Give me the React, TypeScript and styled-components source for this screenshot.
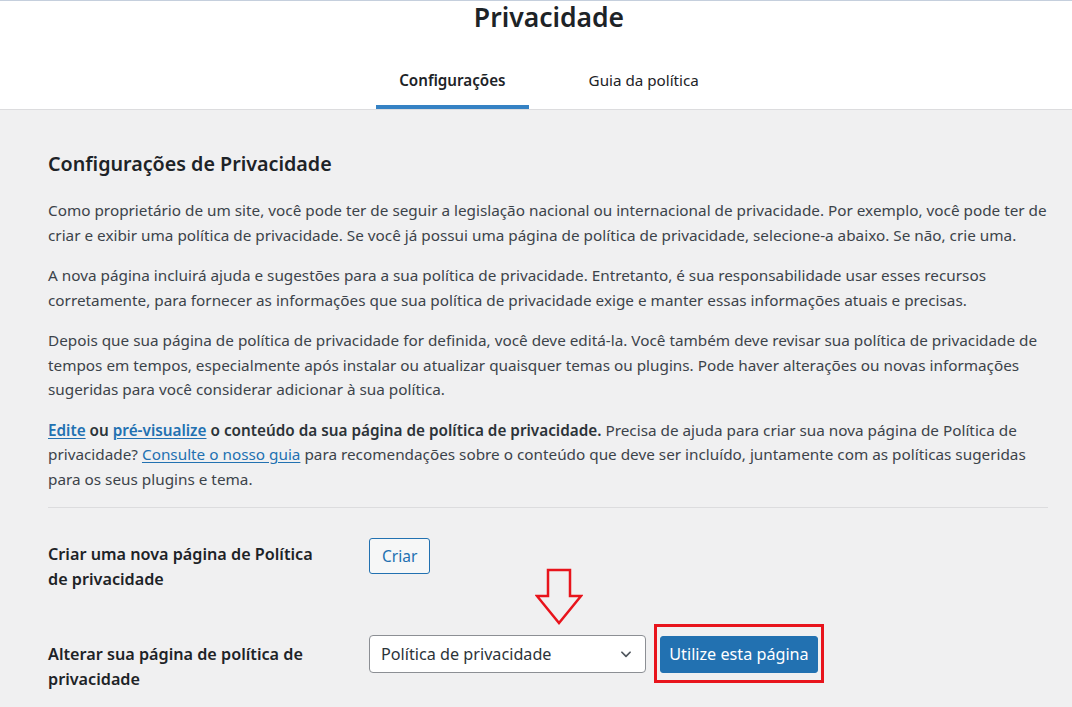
import styled, { createGlobalStyle } from "styled-components";

const GlobalStyle = createGlobalStyle`
	html, body {
		margin: 0;
		padding: 0;
		background: #f0f0f1;
	}
	body {
		font-family: "Noto Sans", "Open Sans", sans-serif;
		color: #3c434a;
		-webkit-font-smoothing: antialiased;
	}
`;

const Page = styled.div`
	width: 1072px;
	height: 707px;
	overflow: hidden;
	background: #f0f0f1;
`;

const Header = styled.header`
	display: flex;
	flex-direction: column;
	align-items: center;
	padding-left: 26px;
	background: #fff;
	border-top: 1px solid #c5cfdd;
	border-bottom: 1px solid #dcdcde;
`;

const Title = styled.h1`
	margin: 0;
	font-size: 26.5px;
	line-height: 32px;
	font-weight: 600;
	color: #1d2327;
`;

const Tabs = styled.nav`
	display: flex;
	gap: 37px;
	margin-top: 16px;
`;

const Tab = styled.a<{ $active?: boolean }>`
	display: block;
	padding: 19px 23px 13px;
	font-size: 15.2px;
	line-height: 24px;
	font-weight: ${(p) => (p.$active ? 600 : 400)};
	color: #1d2327;
	text-decoration: none;
	border-bottom: 4px solid ${(p) => (p.$active ? "#3582c4" : "transparent")};
`;

const Body = styled.main`
	padding: 40px 24px 0 48px;
`;

const SectionTitle = styled.h2`
	margin: 0 0 20px;
	font-size: 19.7px;
	line-height: 28px;
	font-weight: 600;
	color: #1d2327;
`;

const Paragraph = styled.p`
	margin: 0 0 16px;
	font-size: 15.3px;
	line-height: 24.5px;
	color: #3c434a;
	white-space: nowrap;
`;

const Strong = styled.strong`
	font-weight: 600;
	color: #2c3338;
`;

const Link = styled.a`
	color: #2271b1;
	text-decoration: underline;
	text-underline-offset: 2px;
`;

const Divider = styled.hr`
	margin: 0;
	border: none;
	border-top: 1px solid #dcdcde;
`;

const FormRow = styled.div<{ $top: number; $labelOffset: number }>`
	display: grid;
	grid-template-columns: 321px auto;
	align-items: start;
	margin-top: ${(p) => p.$top}px;

	& > label {
		margin-top: ${(p) => p.$labelOffset}px;
	}
`;

const RowLabel = styled.label`
	font-size: 16.2px;
	line-height: 24.5px;
	font-weight: 600;
	color: #1d2327;
`;

const Controls = styled.div`
	position: relative;
	display: flex;
	align-items: center;
	gap: 8px;
`;

const SecondaryButton = styled.button`
	height: 36px;
	padding: 0 12px;
	font-family: inherit;
	font-size: 15.5px;
	color: #2271b1;
	background: #f6f7f7;
	border: 1px solid #2271b1;
	border-radius: 3px;
`;

const SelectBox = styled.div`
	display: flex;
	align-items: center;
	justify-content: space-between;
	box-sizing: border-box;
	width: 277px;
	height: 38px;
	padding: 0 12px 0 11px;
	font-size: 16.2px;
	color: #2c3338;
	background: #fff;
	border: 1px solid #8c8f94;
	border-radius: 4px;
`;

const Highlight = styled.div`
	margin: -12px 0 -10px;
	padding: 9px 3px 7px;
	border: 3px solid #e8141c;
`;

const PrimaryButton = styled.button`
	display: block;
	width: 158px;
	height: 37px;
	padding: 0;
	font-family: inherit;
	font-size: 16.2px;
	color: #fff;
	background: #2271b1;
	border: 1px solid #2271b1;
	border-radius: 3px;
`;

const ArrowMark = styled.svg`
	position: absolute;
	left: 166px;
	top: -67px;
`;

export default function App() {
	return (
		<Page>
			<GlobalStyle />
			<Header>
				<Title>Privacidade</Title>
				<Tabs>
					<Tab $active>Configurações</Tab>
					<Tab>Guia da política</Tab>
				</Tabs>
			</Header>
			<Body>
				<SectionTitle>Configurações de Privacidade</SectionTitle>
				<Paragraph>
					Como proprietário de um site, você pode ter de seguir a legislação nacional ou internacional de privacidade. Por exemplo, você pode ter de
					<br />
					criar e exibir uma política de privacidade. Se você já possui uma página de política de privacidade, selecione-a abaixo. Se não, crie uma.
				</Paragraph>
				<Paragraph>
					A nova página incluirá ajuda e sugestões para a sua política de privacidade. Entretanto, é sua responsabilidade usar esses recursos
					<br />
					corretamente, para fornecer as informações que sua política de privacidade exige e manter essas informações atuais e precisas.
				</Paragraph>
				<Paragraph>
					Depois que sua página de política de privacidade for definida, você deve editá-la. Você também deve revisar sua política de privacidade de
					<br />
					tempos em tempos, especialmente após instalar ou atualizar quaisquer temas ou plugins. Pode haver alterações ou novas informações
					<br />
					sugeridas para você considerar adicionar à sua política.
				</Paragraph>
				<Paragraph>
					<Strong>
						<Link>Edite</Link> ou <Link>pré-visualize</Link> o conteúdo da sua página de política de privacidade.
					</Strong>{" "}
					Precisa de ajuda para criar sua nova página de Política de
					<br />
					privacidade? <Link>Consulte o nosso guia</Link> para recomendações sobre o conteúdo que deve ser incluído, juntamente com as políticas sugeridas
					<br />
					para os seus plugins e tema.
				</Paragraph>
				<Divider />
				<FormRow $top={30} $labelOffset={4}>
					<RowLabel>
						Criar uma nova página de Política
						<br />
						de privacidade
					</RowLabel>
					<Controls>
						<SecondaryButton>Criar</SecondaryButton>
					</Controls>
				</FormRow>
				<FormRow $top={44} $labelOffset={7}>
					<RowLabel>
						Alterar sua página de política de
						<br />
						privacidade
					</RowLabel>
					<Controls>
						<SelectBox>
							<span>Política de privacidade</span>
							<svg width="14" height="14" viewBox="0 0 24 24" fill="none" stroke="#50575e" strokeWidth="3" strokeLinecap="round" strokeLinejoin="round">
								<path d="M5 9l7 7 7-7" />
							</svg>
						</SelectBox>
						<Highlight>
							<PrimaryButton>Utilize esta página</PrimaryButton>
						</Highlight>
						<ArrowMark width="48" height="58" viewBox="0 0 48 58">
							<polygon points="13,2 35,2 35,28 46,28 24,55 2,28 13,28" fill="none" stroke="#e8141c" strokeWidth="2.5" />
						</ArrowMark>
					</Controls>
				</FormRow>
			</Body>
		</Page>
	);
}
